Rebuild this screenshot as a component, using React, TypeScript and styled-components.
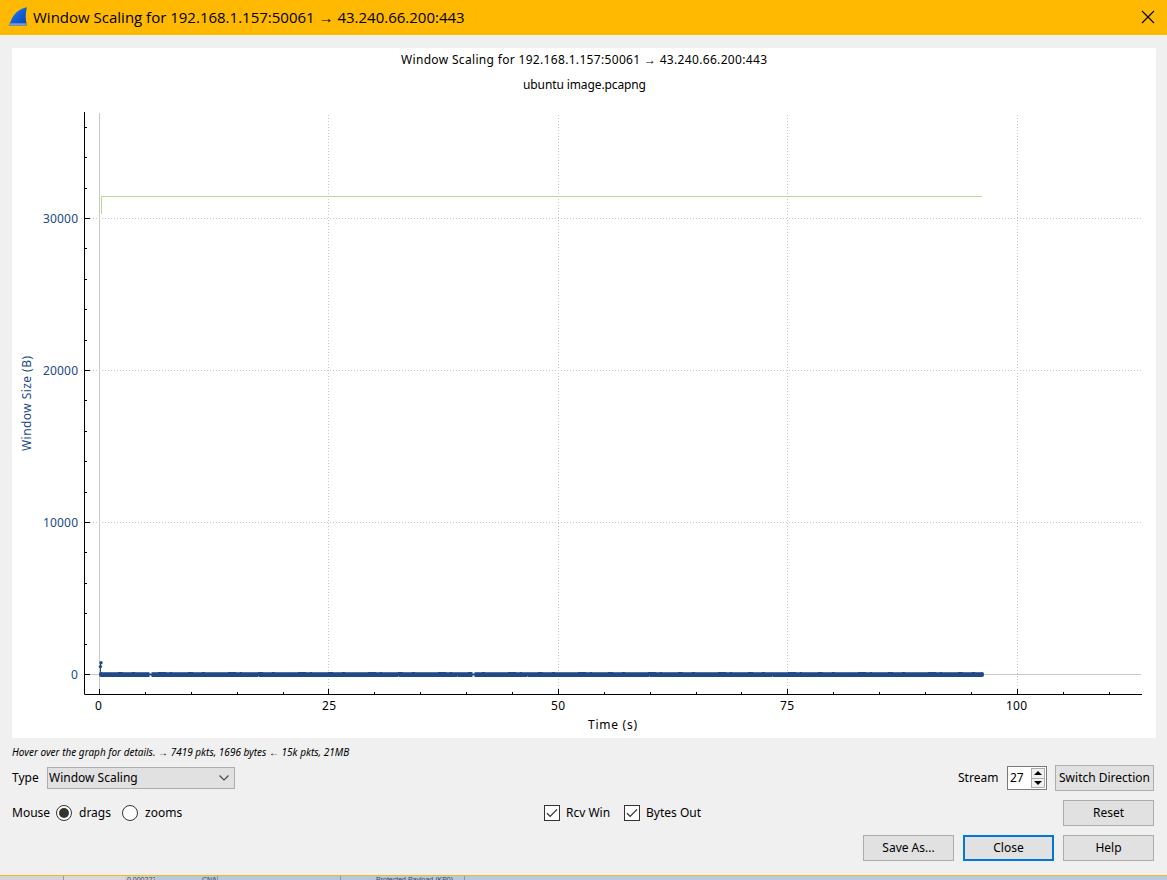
import React from "react";
import styled, { createGlobalStyle } from "styled-components";

const Global = createGlobalStyle`
  * { box-sizing: border-box; }
  body { margin: 0; background: #efefef; overflow: hidden; }
`;

const ui = `"DejaVu Sans Condensed", "DejaVu Sans", sans-serif`;

const Page = styled.div`
  width: 1167px;
  height: 880px;
  display: flex;
  flex-direction: column;
  overflow: hidden;
  background: #f0f0f0;
  color: #000;
  font: 12px/16px "Noto Sans", sans-serif;
`;
const TitleBar = styled.header`
  height: 35px;
  flex: none;
  display: flex;
  align-items: center;
  padding: 0 12px 2px 8px;
  background: #ffb900;
`;
const TitleText = styled.h1`
  flex: 1;
  margin: 0 0 0 5px;
  font: 400 15px/20px "Open Sans", sans-serif;
`;
const Body = styled.main`
  height: 840px;
  flex: none;
  display: flex;
  flex-direction: column;
  padding: 13px 12px 0 12px;
`;
const Chart = styled.svg`
  display: block;
  flex: none;
  width: 1144px;
  height: 690px;
  background: #fff;
  font-family: "Noto Sans", sans-serif;
`;
const Hint = styled.p`
  margin: 5px 0 0;
  height: 18px;
  font: italic 10px/18px "Noto Sans", sans-serif;
`;
const Row = styled.div<{ $top: number }>`
  display: flex;
  align-items: center;
  height: 26px;
  margin-top: ${(p) => p.$top}px;
  flex: none;
  padding-right: 1px;
`;
const Label = styled.span<{ $w: number }>`
  width: ${(p) => p.$w}px;
  white-space: nowrap;
`;
const Spacer = styled.div`
  flex: 1;
`;
const Select = styled.div`
  width: 188px;
  height: 22px;
  display: flex;
  align-items: center;
  justify-content: space-between;
  padding: 0 4px 0 1px;
  border: 1px solid #adadad;
  background: #e1e1e1;
`;
const Button = styled.button<{ $w?: number; $primary?: boolean }>`
  width: ${(p) => p.$w ?? 91}px;
  height: 26px;
  padding: 0;
  border: ${(p) => (p.$primary ? "2px solid #0078d7" : "1px solid #adadad")};
  background: #e1e1e1;
  color: #000;
  font: inherit;
  white-space: nowrap;
`;
const Spin = styled.div`
  width: 40px;
  height: 24px;
  display: flex;
  align-items: center;
  justify-content: space-between;
  border: 1px solid #7a7a7a;
  background: #fff;
  padding: 0 1px 0 2px;
  margin-right: 8px;
`;
const Steps = styled.div`
  display: flex;
  flex-direction: column;
  width: 14px;
  height: 20px;
  border: 1px solid #adadad;
  background: #f0f0f0;
`;
const Step = styled.div`
  flex: 1;
  display: flex;
  align-items: center;
  justify-content: center;
  & + & { border-top: 1px solid #adadad; }
`;
const Radio = styled.span<{ $on?: boolean }>`
  width: 16px;
  height: 16px;
  border: 1px solid #333;
  border-radius: 50%;
  display: flex;
  align-items: center;
  justify-content: center;
  background: #fff;
  margin-right: 7px;
  &::after {
    content: "";
    width: 10px;
    height: 10px;
    border-radius: 50%;
    background: ${(p) => (p.$on ? "#333" : "transparent")};
  }
`;
const Check = styled.span`
  width: 16px;
  height: 16px;
  border: 1px solid #333;
  background: #fff;
  margin-right: 6px;
  display: flex;
`;
const Actions = styled(Row)`
  justify-content: flex-end;
  gap: 9px;
`;
const Backdrop = styled.footer`
  height: 5px;
  flex: none;
  display: flex;
  border-top: 1px solid #f0b92c;
  overflow: hidden;
  background: #b8cadc;
`;
const Cell = styled.div<{ $w: number; $bg?: string; $line?: boolean; $pad?: number; $up?: number }>`
  width: ${(p) => p.$w}px;
  height: 4px;
  flex: none;
  overflow: hidden;
  background: ${(p) => p.$bg ?? "#b6c8da"};
  border-right: ${(p) => (p.$line ? "1px solid #8c99a6" : "0")};
  padding-left: ${(p) => p.$pad ?? 0}px;
  font: 7px/8px "Liberation Sans", sans-serif;
  color: #39434f;
  white-space: nowrap;
`;

const X = (t: number) => Math.round(99 + t * 9.178) + 0.5;
const Y = (b: number) => Math.round(674 - b * 0.0152) + 0.5;
const xMinor = Array.from({ length: 23 }, (_, i) => i * 5);
const yMinor = Array.from({ length: 19 }, (_, i) => i * 2000);

type T = { x: number; y: number; w: number; size?: number; fill?: string; children: string };
const Txt = ({ x, y, w, size = 12, fill = "#000", children }: T) => (
  <text x={x} y={y} textLength={w} fontSize={size} fill={fill}>
    {children}
  </text>
);

function Plot() {
  const navy = "#204a87";
  return (
    <Chart viewBox="12 48 1144 690">
      <Txt x={401} y={64} w={366}>Window Scaling for 192.168.1.157:50061 → 43.240.66.200:443</Txt>
      <Txt x={523} y={89} w={123}>ubuntu image.pcapng</Txt>
      <g stroke="#c8c8c8" strokeWidth="1" strokeDasharray="1 2">
        {[25, 50, 75, 100].map((t) => (
          <line key={t} x1={X(t)} x2={X(t)} y1="115" y2="692" />
        ))}
        {[10000, 20000, 30000].map((b) => (
          <line key={b} x1="90" x2="1141" y1={Y(b)} y2={Y(b)} />
        ))}
      </g>
      <g stroke="#c8c8c8">
        <line x1="99.5" x2="99.5" y1="113" y2="694" />
        <line x1="85" x2="1141" y1="674.5" y2="674.5" />
      </g>
      <path d="M101.5 214V196.5H982" fill="none" stroke="#b8d998" />
      <g stroke="#000">
        <path d="M84.5 112V694.5H1142" fill="none" />
        {xMinor.map((t) => (
          <line key={t} x1={X(t)} x2={X(t)} y1={t % 25 ? 692 : 689} y2="694" />
        ))}
        {yMinor.map((b) => (
          <line key={b} x1="85" x2={b % 10000 ? 87 : 90} y1={Y(b)} y2={Y(b)} />
        ))}
        {[10000, 30000].map((b) => (
          <line key={b} x1="85" x2="90" y1={Y(b)} y2={Y(b)} />
        ))}
      </g>
      <line x1="100.5" x2="100.5" y1="663" y2="674" stroke={navy} />
      <circle cx="101" cy="662.8" r="1.7" fill={navy} />
      <circle cx="100.4" cy="666.6" r="1.7" fill={navy} />
      <rect x="99" y="672" width="885" height="5" rx="2" fill={navy} />
      <line x1="102" x2="981" y1="672.5" y2="672.5" stroke="#fff" strokeOpacity=".22" strokeDasharray="16 5 9 3 23 8 4 2" />
      <path d="M150.5 672v1.6M150.5 675.4v1.6M473.5 672v1.6M473.5 675.4v1.6" stroke="#fff" strokeWidth="2" />
      <path d="M258.5 676v1M398.5 676v1M457.5 676v1M527.5 676v1M649.5 676v1M772.5 676v1" stroke="#8fa5c3" />
      {[0, 10000, 20000, 30000].map((b) => (
        <Txt key={b} x={b ? 43 : 71} y={Y(b) + 4} w={b ? 35 : 7} fill={navy}>{String(b)}</Txt>
      ))}
      <Txt x={95} y={710} w={7}>0</Txt>
      <Txt x={322} y={710} w={14}>25</Txt>
      <Txt x={551} y={710} w={14}>50</Txt>
      <Txt x={780} y={710} w={14}>75</Txt>
      <Txt x={1006} y={710} w={21}>100</Txt>
      <Txt x={588} y={729} w={49}>Time (s)</Txt>
      <g transform="translate(31 451) rotate(-90)">
        <Txt x={0} y={0} w={95} fill={navy}>Window Size (B)</Txt>
      </g>
    </Chart>
  );
}

const Tick = () => (
  <svg width="14" height="14" viewBox="0 0 14 14">
    <path d="M2 7.2L5.2 10.4L12 3.4" fill="none" stroke="#333" strokeWidth="1.3" />
  </svg>
);

export default function App() {
  return (
    <Page>
      <Global />
      <TitleBar>
        <svg width="20" height="20" viewBox="0 0 20 20">
          <defs>
            <linearGradient id="fin" x1="0" y1="0" x2="1" y2="1">
              <stop offset="0" stopColor="#3c8cf0" />
              <stop offset=".5" stopColor="#1161dc" />
              <stop offset="1" stopColor="#0a3fae" />
            </linearGradient>
          </defs>
          <path d="M.3 18.6C3 17.500 3.500 3 19 .2C17.300 6 17.300 13 19 18.600Z" fill="url(#fin)" />
          <path d="M.3 18.600L2.500 16.200H18.300L19 18.600Z" fill="#7b9cc4" />
        </svg>
        <TitleText>Window Scaling for 192.168.1.157:50061 → 43.240.66.200:443</TitleText>
        <svg width="14" height="14" viewBox="0 0 14 14">
          <path d="M1 1L13 13M13 1L1 13" stroke="#000" strokeWidth="1.100" />
        </svg>
      </TitleBar>
      <Body>
        <Plot />
        <Hint>Hover over the graph for details. → 7419 pkts, 1696 bytes ← 15k pkts, 21MB</Hint>
        <Row $top={4}>
          <Label $w={35}>Type</Label>
          <Select>
            Window Scaling
            <svg width="12" height="8" viewBox="0 0 12 8">
              <path d="M1.500 1.500L6 6L10.500 1.500" fill="none" stroke="#444" strokeWidth="1.100" />
            </svg>
          </Select>
          <Spacer />
          <Label $w={49}>Stream</Label>
          <Spin>
            27
            <Steps>
              <Step><svg width="8" height="4" viewBox="0 0 8 4"><path d="M0 4L4 0L8 4Z" /></svg></Step>
              <Step><svg width="8" height="4" viewBox="0 0 8 4"><path d="M0 0L4 4L8 0Z" /></svg></Step>
            </Steps>
          </Spin>
          <Button $w={99}>Switch Direction</Button>
        </Row>
        <Row $top={9}>
          <Label $w={44}>Mouse</Label>
          <Radio $on />
          <Label $w={43}>drags</Label>
          <Radio />
          <Label $w={399}>zooms</Label>
          <Check><Tick /></Check>
          <Label $w={58}>Rcv Win</Label>
          <Check><Tick /></Check>
          <Label $w={60}>Bytes Out</Label>
          <Spacer />
          <Button>Reset</Button>
        </Row>
        <Actions $top={9}>
          <Button>Save As...</Button>
          <Button $primary>Close</Button>
          <Button>Help</Button>
        </Actions>
      </Body>
      <Backdrop>
        <Cell $w={64} $bg="#d6d3d6" $line />
        <Cell $w={61} $bg="#dad6da" />
        <Cell $w={30} $bg="#cfcfd3" $pad={2}>0.000222</Cell>
        <Cell $w={63} $pad={47} $line>CNAM</Cell>
        <Cell $w={123} $line />
        <Cell $w={124} $pad={35} $line>Protected Payload (KP0)</Cell>
      </Backdrop>
    </Page>
  );
}
